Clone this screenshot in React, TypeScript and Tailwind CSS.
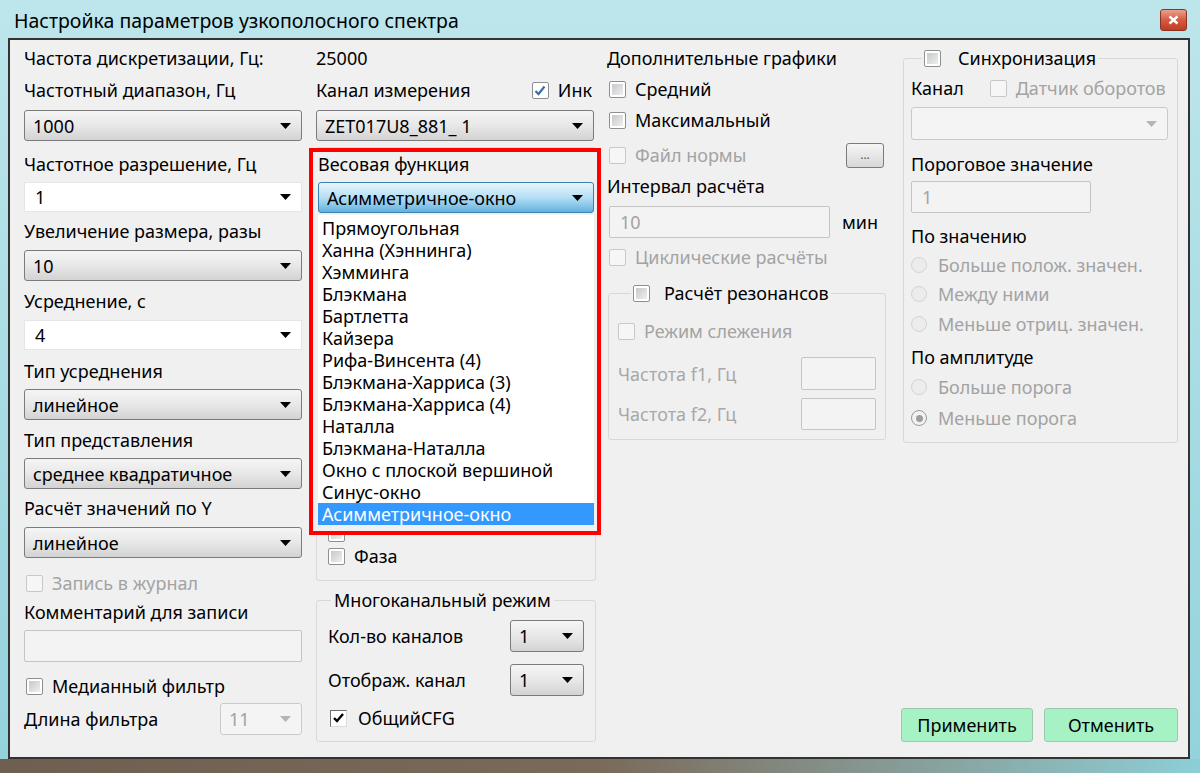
import React from 'react';

type Kind = 'gray' | 'white' | 'blue' | 'off';

const comboKinds: Record<Kind, string> = {
  gray: 'border border-[#7b7b7b] rounded-[3px] bg-gradient-to-b from-[#f5f5f5] via-[#e8e8e8] to-[#d3d3d3] text-black',
  white: 'border border-[#e6e6e6] bg-white text-black',
  blue: 'border border-[#3c7fb1] rounded-[3px] bg-gradient-to-b from-[#e8f6fd] via-[#b5def4] to-[#5fb3e0] text-black',
  off: 'border border-[#cacaca] rounded-[3px] bg-[#f4f4f4] text-[#a3a3a3]',
};

const Arrow = ({ color = '#000' }: { color?: string }) => (
  <svg width="11" height="6" viewBox="0 0 11 6" className="shrink-0">
    <path d="M0 0H11L5.5 6Z" fill={color} />
  </svg>
);

const Combo = ({ value = '', kind = 'gray', className = '' }: { value?: string; kind?: Kind; className?: string }) => (
  <div className={`flex items-center justify-between pl-[8px] pr-[10px] ${comboKinds[kind]} ${className}`}>
    <span>{value}</span>
    <Arrow color={kind === 'off' ? '#b5b5b5' : '#000'} />
  </div>
);

const Check = ({ checked = false, disabled = false, classic = false }: { checked?: boolean; disabled?: boolean; classic?: boolean }) => {
  if (classic) {
    return (
      <div className="w-[17px] h-[17px] shrink-0 border border-[#6f6f6f] border-r-[#dadada] border-b-[#dadada] bg-white flex items-center justify-center">
        <svg width="11" height="10" viewBox="0 0 11 10">
          <path d="M1 5 L4 8 L10 1" stroke="#000" strokeWidth="2.4" fill="none" />
        </svg>
      </div>
    );
  }
  return (
    <div
      className={`w-[17px] h-[17px] shrink-0 border rounded-[2px] flex items-center justify-center ${
        disabled ? 'border-[#c8c8c8] bg-[#f6f6f6]' : 'border-[#8e8f8f] bg-white'
      }`}
    >
      {!disabled && !checked && <div className="w-[11px] h-[11px] bg-gradient-to-br from-[#c6c8cc] to-[#efefef]" />}
      {checked && (
        <svg width="12" height="11" viewBox="0 0 12 11">
          <path d="M1.5 6 L4.5 9 L10.5 1.5" stroke="#3c6ea8" strokeWidth="2.2" fill="none" />
        </svg>
      )}
    </div>
  );
};

const CheckRow = ({ label, checked, disabled, classic, className = '' }: { label?: string; checked?: boolean; disabled?: boolean; classic?: boolean; className?: string }) => (
  <div className={`h-[22px] flex items-center gap-[9px] whitespace-nowrap ${disabled ? 'text-[#a3a3a3]' : 'text-black'} ${className}`}>
    <Check checked={checked} disabled={disabled} classic={classic} />
    {label && <span>{label}</span>}
  </div>
);

const Radio = ({ label, checked = false, className = '' }: { label: string; checked?: boolean; className?: string }) => (
  <div className={`h-[22px] flex items-center gap-[11px] whitespace-nowrap text-[#a3a3a3] ${className}`}>
    <div className={`w-[16px] h-[16px] shrink-0 rounded-full border flex items-center justify-center ${checked ? 'border-[#9a9a9a] bg-[#f2f2f2]' : 'border-[#d4d4d4] bg-[#ececec]'}`}>
      {checked && <div className="w-[7px] h-[7px] rounded-full bg-[#9d9d9d]" />}
    </div>
    <span>{label}</span>
  </div>
);

const Label = ({ children, className = '' }: { children: React.ReactNode; className?: string }) => (
  <div className={`h-[22px] leading-[22px] whitespace-nowrap ${className}`}>{children}</div>
);

const Field = ({ value = '', className = '' }: { value?: string; className?: string }) => (
  <div className={`border border-[#c4c4c4] rounded-[2px] bg-[#f3f3f3] flex items-center pl-[10px] text-[#a3a3a3] ${className}`}>{value}</div>
);

const windows = [
  'Прямоугольная',
  'Ханна (Хэннинга)',
  'Хэмминга',
  'Блэкмана',
  'Бартлетта',
  'Кайзера',
  'Рифа-Винсента (4)',
  'Блэкмана-Харриса (3)',
  'Блэкмана-Харриса (4)',
  'Наталла',
  'Блэкмана-Наталла',
  'Окно с плоской вершиной',
  'Синус-окно',
  'Асимметричное-окно',
];

export default function App() {
  return (
    <div className="w-[1200px] h-[773px] flex flex-col overflow-hidden bg-gradient-to-b from-[#bde6ec] to-[#93d2dc] font-['Noto_Sans',sans-serif] text-[18px] leading-[22px] text-black">
      {/* title bar */}
      <div className="h-[38px] flex items-center justify-between pl-[14px] pr-[13px] pt-[4px]">
        <span className="text-[19.5px] text-black">Настройка параметров узкополосного спектра</span>
        <div className="w-[27px] h-[22px] mb-[2px] rounded-[3px] border border-[#8a3324] bg-gradient-to-b from-[#eba08e] via-[#d45a42] to-[#c23b22] flex items-center justify-center">
          <svg width="11" height="10" viewBox="0 0 11 10">
            <path d="M1.5 1.5 L9.5 8.5 M9.5 1.5 L1.5 8.5" stroke="#fff" strokeWidth="2.4" />
          </svg>
        </div>
      </div>

      {/* window body */}
      <div className="mx-[8px] mr-[10px] h-[721px] border-2 border-[#333] bg-[#f0f0f0] flex pl-[14px]">
        {/* column 1 */}
        <div className="w-[278px] flex flex-col">
          <Label className="mt-[7px]">Частота дискретизации, Гц:</Label>
          <Label className="mt-[10px]">Частотный диапазон, Гц</Label>
          <Combo value="1000" className="mt-[9px] h-[31px]" />
          <Label className="mt-[12px]">Частотное разрешение, Гц</Label>
          <Combo value="1" kind="white" className="mt-[7px] h-[30px] pl-[10px]" />
          <Label className="mt-[8px]">Увеличение размера, разы</Label>
          <Combo value="10" className="mt-[8px] h-[31px]" />
          <Label className="mt-[9px]">Усреднение, с</Label>
          <Combo value="4" kind="white" className="mt-[8px] h-[30px] pl-[10px]" />
          <Label className="mt-[10px]">Тип усреднения</Label>
          <Combo value="линейное" className="mt-[7px] h-[31px]" />
          <Label className="mt-[9px]">Тип представления</Label>
          <Combo value="среднее квадратичное" className="mt-[7px] h-[31px]" />
          <Label className="mt-[8px]">Расчёт значений по Y</Label>
          <Combo value="линейное" className="mt-[8px] h-[31px]" />
          <CheckRow label="Запись в журнал" disabled className="mt-[14px] pl-[2px]" />
          <Label className="mt-[7px]">Комментарий для записи</Label>
          <Field className="mt-[7px] h-[32px]" />
          <CheckRow label="Медианный фильтр" className="mt-[13px] pl-[2px]" />
          <div className="mt-[6px] h-[32px] flex items-center justify-between">
            <span>Длина фильтра</span>
            <Combo value="11" kind="off" className="w-[82px] h-[32px]" />
          </div>
        </div>

        {/* column 2 */}
        <div className="relative w-[278px] ml-[14px] flex flex-col">
          <Label className="mt-[7px]">25000</Label>
          <div className="mt-[10px] h-[22px] flex items-center justify-between">
            <span>Канал измерения</span>
            <div className="flex items-center gap-[9px] pr-[2px]">
              <Check checked />
              <span>Инк</span>
            </div>
          </div>
          <Combo value="ZET017U8_881_ 1" className="mt-[9px] h-[31px]" />

          {/* group mostly hidden behind the open list */}
          <div className="mt-[6px] w-[280px] h-[434px] border border-[#d8d8d8] rounded-[3px] flex flex-col justify-end gap-[1px] pb-[13px] pl-[11px]">
            <CheckRow />
            <CheckRow label="Фаза" />
          </div>

          <fieldset className="mt-[8px] w-[280px] h-[153px] border border-[#d8d8d8] rounded-[3px]">
            <legend className="ml-[14px] px-[3px] h-[22px] leading-[22px]">Многоканальный режим</legend>
            <div className="px-[11px]">
              <div className="mt-[9px] h-[32px] flex items-center justify-between">
                <span>Кол-во каналов</span>
                <Combo value="1" className="w-[74px] h-[32px]" />
              </div>
              <div className="mt-[12px] h-[32px] flex items-center justify-between">
                <span>Отображ. канал</span>
                <Combo value="1" className="w-[74px] h-[32px]" />
              </div>
              <CheckRow label="ОбщийCFG" classic className="mt-[11px] pl-[2px] gap-[11px]" />
            </div>
          </fieldset>

          {/* opened window-function list, framed in red */}
          <div className="absolute top-[108px] -left-[7px] w-[292px] h-[387px] border-[4px] border-[#ff0000] bg-[#f0f0f0] pl-[5px] pr-[3px] flex flex-col">
            <Label className="mt-[1px]">Весовая функция</Label>
            <Combo value="Асимметричное-окно" kind="blue" className="mt-[7px] h-[31px] pl-[6px]" />
            <div className="mt-[2px] bg-white pt-[2px] flex flex-col">
              {windows.map((w, i) => (
                <div
                  key={w}
                  className={`h-[22px] leading-[22px] pl-[4px] whitespace-nowrap ${i === windows.length - 1 ? 'bg-[#3399ff] text-white' : 'text-black'}`}
                >
                  {w}
                </div>
              ))}
            </div>
          </div>
        </div>

        {/* column 3 */}
        <div className="w-[280px] ml-[13px] flex flex-col">
          <Label className="mt-[7px]">Дополнительные графики</Label>
          <CheckRow label="Средний" className="mt-[9px] pl-[2px]" />
          <CheckRow label="Максимальный" className="mt-[9px] pl-[2px]" />
          <div className="mt-[11px] h-[26px] flex items-center justify-between pr-[3px]">
            <CheckRow label="Файл нормы" disabled className="pl-[2px]" />
            <div className="w-[38px] h-[25px] border border-[#7b7b7b] rounded-[3px] bg-gradient-to-b from-[#f5f5f5] to-[#d8d8d8] flex items-center justify-center text-[12px] text-[#555] leading-none">
              ...
            </div>
          </div>
          <Label className="mt-[7px]">Интервал расчёта</Label>
          <div className="mt-[9px] h-[32px] flex items-center">
            <Field value="10" className="ml-[2px] w-[221px] h-[32px]" />
            <span className="ml-[12px]">мин</span>
          </div>
          <CheckRow label="Циклические расчёты" disabled className="mt-[8px] pl-[2px]" />

          <fieldset className="mt-[14px] ml-[1px] w-[278px] h-[158px] border border-[#d8d8d8] rounded-[3px]">
            <legend className="ml-[22px] px-[2px]">
              <CheckRow label="Расчёт резонансов" className="gap-[14px]" />
            </legend>
            <div className="pl-[9px] pr-[9px]">
              <CheckRow label="Режим слежения" disabled className="mt-[16px]" />
              <div className="mt-[15px] h-[33px] flex items-center justify-between text-[#a8a8a8]">
                <span>Частота f1, Гц</span>
                <Field className="w-[75px] h-[33px]" />
              </div>
              <div className="mt-[8px] h-[32px] flex items-center justify-between text-[#a8a8a8]">
                <span>Частота f2, Гц</span>
                <Field className="w-[75px] h-[32px]" />
              </div>
            </div>
          </fieldset>
        </div>

        {/* column 4 */}
        <div className="w-[275px] ml-[16px] flex flex-col">
          <fieldset className="mt-[7px] h-[396px] border border-[#d8d8d8] rounded-[3px]">
            <legend className="ml-[18px] px-[2px]">
              <CheckRow label="Синхронизация" className="gap-[17px]" />
            </legend>
            <div className="pl-[7px] pr-[9px] flex flex-col">
              <div className="mt-[8px] h-[22px] flex items-center">
                <span>Канал</span>
                <CheckRow label="Датчик оборотов" disabled className="ml-[26px] gap-[8px]" />
              </div>
              <Combo kind="off" className="mt-[8px] h-[33px]" />
              <Label className="mt-[13px]">Пороговое значение</Label>
              <Field value="1" className="mt-[6px] w-[180px] h-[32px]" />
              <Label className="mt-[12px]">По значению</Label>
              <Radio label="Больше полож. значен." className="mt-[7px]" />
              <Radio label="Между ними" className="mt-[7px]" />
              <Radio label="Меньше отриц. значен." className="mt-[8px]" />
              <Label className="mt-[11px]">По амплитуде</Label>
              <Radio label="Больше порога" className="mt-[8px]" />
              <Radio label="Меньше порога" checked className="mt-[9px]" />
            </div>
          </fieldset>

          <div className="mt-auto mb-[15px] -ml-[2px] flex gap-[11px]">
            <button className="w-[133px] h-[34px] rounded-[3px] border border-[#9cc8ad] bg-[#a6f2c5] text-black">Применить</button>
            <button className="w-[135px] h-[34px] rounded-[3px] border border-[#9cc8ad] bg-[#a6f2c5] text-black">Отменить</button>
          </div>
        </div>
      </div>

      {/* bottom frame */}
      <div className="flex-1 bg-gradient-to-r from-[#6f5f50] via-[#7a6a5a] to-[#8ccfd7]" />
    </div>
  );
}
